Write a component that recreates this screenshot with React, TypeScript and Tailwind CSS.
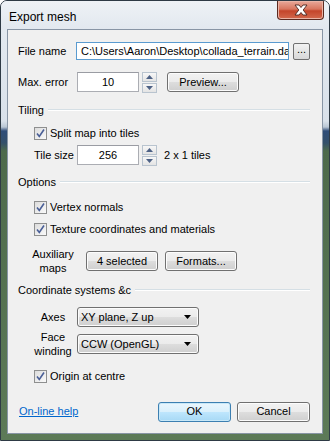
import React from 'react'

const font = { fontFamily: '"Liberation Sans", Arial, sans-serif' }

function Check() {
  return (
    <span className="flex h-[13px] w-[13px] shrink-0 items-center justify-center border border-[#8e8f8f] bg-[linear-gradient(135deg,#dcdcdc,#fafafa)]">
      <svg width="11" height="11" viewBox="0 0 11 11">
        <path d="M2 5.5 L4.3 8.5 L9 1.5" fill="none" stroke="#4a5f97" strokeWidth="1.6" />
      </svg>
    </span>
  )
}

function CheckRow({ label, className = '' }: { label: string; className?: string }) {
  return (
    <div className={`flex h-[14px] items-center gap-[3px] pl-[16px] ${className}`}>
      <Check />
      <span>{label}</span>
    </div>
  )
}

function Button({ label, w, def = false }: { label: string; w: string; def?: boolean }) {
  return (
    <div
      className={`flex h-[20px] ${w} items-center justify-center rounded-[3px] border ${
        def
          ? 'border-[#3c7fb1] bg-[linear-gradient(#eaf6fd_0%,#d9f0fc_50%,#bee6fd_51%,#a7d9f5_100%)] shadow-[inset_0_0_0_1px_#c8e8f8]'
          : 'border-[#707070] bg-[linear-gradient(#f2f2f2_0%,#ebebeb_50%,#dddddd_51%,#cfcfcf_100%)] shadow-[inset_0_0_0_1px_#fcfcfc]'
      }`}
    >
      {label}
    </div>
  )
}

function Spin() {
  return (
    <div className="ml-[3px] flex w-[15px] flex-col gap-px">
      {[0, 1].map((i) => (
        <div key={i} className="flex h-[10px] items-center justify-center border border-[#b9c4cf] bg-[linear-gradient(#f7f7f7,#e4e4e4)]">
          <svg width="7" height="4" viewBox="0 0 7 4">
            <path d={i === 0 ? 'M0 4 L3.5 0 L7 4 Z' : 'M0 0 L3.5 4 L7 0 Z'} fill="#4d6185" />
          </svg>
        </div>
      ))}
    </div>
  )
}

function NumBox({ value }: { value: string }) {
  return (
    <div className="flex h-[20px] w-[62px] items-center justify-center border border-[#abadb3] border-t-[#9a9ca3] bg-white">
      {value}
    </div>
  )
}

function Group({ label, line }: { label: string; line: string }) {
  return (
    <div className={`flex h-[14px] items-center gap-[4px] pr-[12px] ${line}`}>
      <span>{label}</span>
      <div className="h-[2px] flex-1 border-t border-[#d5dfe5] border-b-white border-b" />
    </div>
  )
}

function Combo({ label }: { label: string }) {
  return (
    <div className="flex h-[20px] w-[122px] items-center justify-between rounded-[3px] border border-[#707070] bg-[linear-gradient(#f2f2f2_0%,#ebebeb_50%,#dddddd_51%,#cfcfcf_100%)] pl-[3px] pr-[7px] shadow-[inset_0_0_0_1px_#fcfcfc]">
      <span>{label}</span>
      <svg width="7" height="4" viewBox="0 0 7 4">
        <path d="M0 0 L7 0 L3.5 4 Z" fill="#000" />
      </svg>
    </div>
  )
}

export default function App() {
  return (
    <div
      style={font}
      className="flex h-[441px] w-[330px] flex-col overflow-hidden rounded-t-[7px] border border-[#2e3a45] bg-[linear-gradient(to_bottom,#e6ecf2_0px,#d9e1ea_120px,#b9c6d4_126px,#2f4d78_130px,#34506a_142px,#4d6a4b_150px,#5c7a57_100%)] text-[11px] text-black"
    >
      <div className="flex h-[28px] shrink-0 items-start justify-between bg-[linear-gradient(#eef2f6,#e2e8ef)] pl-[8px] pr-[5px]">
        <span className="mt-[7px] text-[12px]">Export mesh</span>
        <div className="flex h-[19px] w-[47px] items-center justify-center rounded-b-[4px] border border-t-0 border-[#5b2a20] bg-[linear-gradient(#e9a99a_0%,#d8765f_45%,#c4452b_55%,#d3694d_100%)] shadow-[inset_0_0_0_1px_#eab4a6]">
          <svg width="14" height="12" viewBox="0 0 14 12">
            <path
              d="M1 1 L5 1 L7 3.5 L9 1 L13 1 L9.2 6 L13 11 L9 11 L7 8.5 L5 11 L1 11 L4.8 6 Z"
              fill="#fff"
              stroke="#4a2620"
              strokeWidth="0.9"
              strokeLinejoin="round"
            />
          </svg>
        </div>
      </div>

      <div className="mx-[6px] mb-[6px] flex flex-1 flex-col border border-[#8895a5] bg-[#f0f0f0] pb-[11px] pl-[10px]">
        <div className="mt-[12px] flex h-[18px] items-center">
          <span className="w-[58px]">File name</span>
          <div className="flex h-[18px] w-[213px] items-center overflow-hidden whitespace-nowrap border border-[#5a9bd0] bg-white pl-[4px]">
            C:\Users\Aaron\Desktop\collada_terrain.dae
          </div>
          <div className="ml-[4px] flex h-[17px] w-[17px] items-center justify-center rounded-[2px] border border-[#707070] bg-[linear-gradient(#f2f2f2,#d8d8d8)] pb-[3px]">
            ...
          </div>
        </div>

        <div className="mt-[12px] flex h-[20px] items-center">
          <span className="w-[59px]">Max. error</span>
          <NumBox value="10" />
          <Spin />
          <div className="ml-[10px]">
            <Button label="Preview..." w="w-[72px]" />
          </div>
        </div>

        <Group label="Tiling" line="mt-[11px]" />
        <CheckRow label="Split map into tiles" className="mt-[9px]" />

        <div className="mt-[5px] flex h-[20px] items-center pl-[16px]">
          <span className="w-[43px]">Tile size</span>
          <NumBox value="256" />
          <Spin />
          <span className="ml-[7px]">2 x 1 tiles</span>
        </div>

        <Group label="Options" line="mt-[10px]" />
        <CheckRow label="Vertex normals" className="mt-[11px]" />
        <CheckRow label="Texture coordinates and materials" className="mt-[8px]" />

        <div className="mt-[11px] flex h-[28px] items-center">
          <span className="ml-[12px] w-[46px] text-center leading-[14px]">
            Auxiliary
            <br />
            maps
          </span>
          <div className="ml-[10px]">
            <Button label="4 selected" w="w-[72px]" />
          </div>
          <div className="ml-[7px]">
            <Button label="Formats..." w="w-[72px]" />
          </div>
        </div>

        <Group label="Coordinate systems &c" line="mt-[8px]" />

        <div className="mt-[10px] flex h-[20px] items-center">
          <span className="ml-[12px] w-[46px] text-center">Axes</span>
          <div className="ml-[1px]">
            <Combo label="XY plane, Z up" />
          </div>
        </div>

        <div className="mt-[3px] flex h-[28px] items-center">
          <span className="ml-[12px] w-[46px] text-center leading-[14px]">
            Face
            <br />
            winding
          </span>
          <div className="ml-[1px]">
            <Combo label="CCW (OpenGL)" />
          </div>
        </div>

        <CheckRow label="Origin at centre" className="mt-[11px]" />

        <div className="mt-auto flex h-[21px] items-center pr-[12px]">
          <span className="ml-px text-[#0066cc] underline">On-line help</span>
          <div className="ml-auto flex gap-[6px]">
            <Button label="OK" w="w-[73px]" def />
            <Button label="Cancel" w="w-[73px]" />
          </div>
        </div>
      </div>
    </div>
  )
}
